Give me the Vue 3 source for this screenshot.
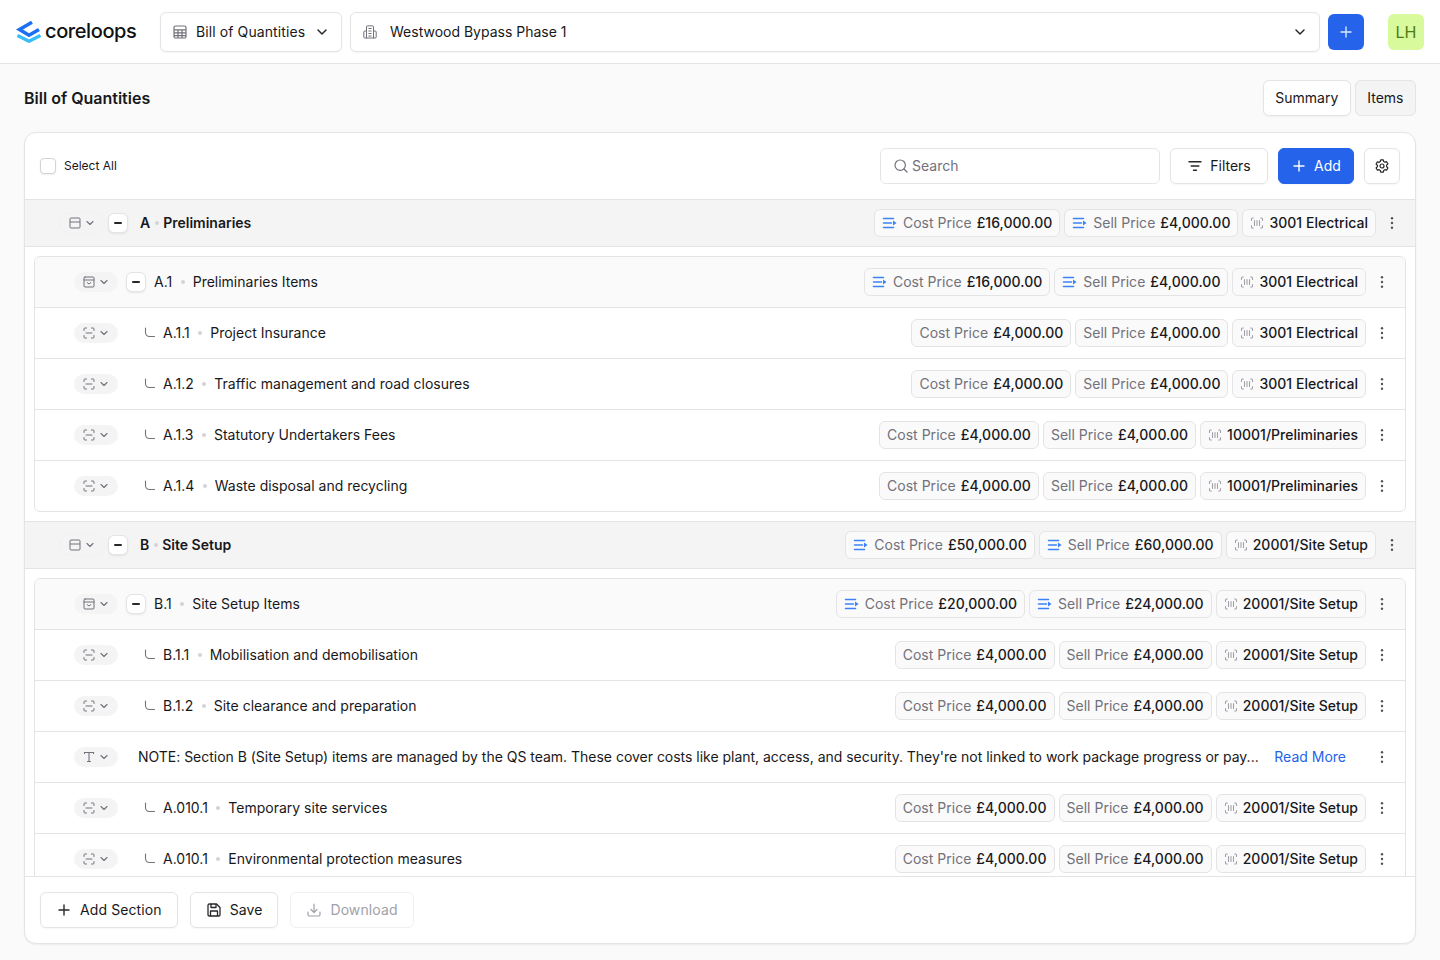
<script setup>
const sections = [
  {
    code: 'A', title: 'Preliminaries', cost: '£16,000.00', sell: '£4,000.00', account: '3001 Electrical',
    group: {
      code: 'A.1', title: 'Preliminaries Items', cost: '£16,000.00', sell: '£4,000.00', account: '3001 Electrical',
      rows: [
        { code: 'A.1.1', title: 'Project Insurance', account: '3001 Electrical' },
        { code: 'A.1.2', title: 'Traffic management and road closures', account: '3001 Electrical' },
        { code: 'A.1.3', title: 'Statutory Undertakers Fees', account: '10001/Preliminaries' },
        { code: 'A.1.4', title: 'Waste disposal and recycling', account: '10001/Preliminaries' },
      ],
    },
  },
  {
    code: 'B', title: 'Site Setup', cost: '£50,000.00', sell: '£60,000.00', account: '20001/Site Setup',
    group: {
      code: 'B.1', title: 'Site Setup Items', cost: '£20,000.00', sell: '£24,000.00', account: '20001/Site Setup',
      rows: [
        { code: 'B.1.1', title: 'Mobilisation and demobilisation', account: '20001/Site Setup' },
        { code: 'B.1.2', title: 'Site clearance and preparation', account: '20001/Site Setup' },
        { note: "NOTE: Section B (Site Setup) items are managed by the QS team. These cover costs like plant, access, and security. They're not linked to work package progress or pay..." },
        { code: 'A.010.1', title: 'Temporary site services', account: '20001/Site Setup' },
        { code: 'A.010.1', title: 'Environmental protection measures', account: '20001/Site Setup' },
      ],
    },
  },
]
</script>

<template>
  <svg class="defs" aria-hidden="true">
    <symbol id="i-chev" viewBox="0 0 16 16"><path d="M4 6l4 4 4-4" fill="none" stroke="currentColor" stroke-width="1.5" stroke-linecap="round" stroke-linejoin="round" /></symbol>
    <symbol id="i-plus" viewBox="0 0 16 16"><path d="M8 3v10M3 8h10" fill="none" stroke="currentColor" stroke-width="1.4" stroke-linecap="round" /></symbol>
    <symbol id="i-table" viewBox="0 0 16 16"><g fill="none" stroke="currentColor" stroke-width="1.2"><rect x="2" y="2" width="12" height="12" rx="1.6" /><path d="M2 5.800h12M2 8.900h12M2 11.600h12M6 5.800V14M10 5.800V14" /></g></symbol>
    <symbol id="i-building" viewBox="0 0 16 16"><g fill="none" stroke="currentColor" stroke-width="1" stroke-linejoin="round" stroke-linecap="round"><path d="M4.500 14V3a1.200 1.200 0 0 1 1.200-1.200h4.600A1.200 1.200 0 0 1 11.500 3v11" /><path d="M4.500 7H2.800A1 1 0 0 0 1.800 8v5A1 1 0 0 0 2.800 14h10.400a1 1 0 0 0 1-1V8a1 1 0 0 0-1-1h-1.700" /><path d="M6.800 4.500h2.400M6.800 7h2.400M6.800 9.500h2.400M6.800 12h2.400" /></g></symbol>
    <symbol id="i-search" viewBox="0 0 16 16"><g fill="none" stroke="currentColor" stroke-width="1.2" stroke-linecap="round"><circle cx="7.200" cy="7.200" r="5.200" /><path d="M11 11l3 3" /></g></symbol>
    <symbol id="i-filter" viewBox="0 0 16 16"><path d="M2 3.800h12M4.200 8h7.600M6.500 12.200h3" fill="none" stroke="currentColor" stroke-width="1.400" stroke-linecap="round" /></symbol>
    <symbol id="i-gear" viewBox="0 0 16 16"><g fill="none" stroke="currentColor" stroke-width="1.200" stroke-linejoin="round"><path d="M6.700 1.800h2.600l.4 1.700 1.200.7 1.700-.5 1.300 2.200-1.300 1.300v1.500l1.300 1.300-1.300 2.200-1.700-.5-1.200.7-.4 1.700H6.700l-.4-1.700-1.200-.7-1.700.5L2.100 10l1.300-1.300V7.300L2.100 6l1.300-2.200 1.700.5 1.200-.7z" /><circle cx="8" cy="8" r="2" /></g></symbol>
    <symbol id="i-dots" viewBox="0 0 16 16"><g fill="currentColor"><circle cx="8" cy="3.200" r="1.200" /><circle cx="8" cy="8" r="1.200" /><circle cx="8" cy="12.800" r="1.200" /></g></symbol>
    <symbol id="i-section" viewBox="0 0 14 14"><g fill="none" stroke="currentColor" stroke-width="1"><rect x="2" y="2" width="10" height="10" rx="1" /><path d="M2 6h10" /></g></symbol>
    <symbol id="i-group" viewBox="0 0 14 14"><g fill="none" stroke="currentColor" stroke-width="1" stroke-linecap="round"><rect x="2" y="2" width="10" height="10" rx="1" /><path d="M2 5h10M5.200 7.600 7 9l1.800-1.400" /></g></symbol>
    <symbol id="i-item" viewBox="0 0 14 14"><path d="M2 4.500V3a1 1 0 0 1 1-1h1.500M9.500 2H11a1 1 0 0 1 1 1v1.500M12 9.500V11a1 1 0 0 1-1 1H9.500M4.500 12H3a1 1 0 0 1-1-1V9.500M4 7h6" fill="none" stroke="currentColor" stroke-width="1" stroke-linecap="round" /></symbol>
    <symbol id="i-text" viewBox="0 0 14 14"><path d="M2.500 3.500V2.500h9v1M7 2.500v9M5.500 11.500h3" fill="none" stroke="currentColor" stroke-width="1.100" stroke-linecap="round" /></symbol>
    <symbol id="i-corner" viewBox="0 0 12 12"><path d="M1.500 1v4.500A4 4 0 0 0 5.500 9.500h5" fill="none" stroke="currentColor" stroke-width="1.100" stroke-linecap="round" /></symbol>
    <symbol id="i-price" viewBox="0 0 16 16"><path d="M1.500 3.500h10M1.500 8h8M1.500 12.500h10" fill="none" stroke="currentColor" stroke-width="1.500" stroke-linecap="round" /><path d="M11 5.500 14.500 8 11 10.500z" fill="currentColor" /></symbol>
    <symbol id="i-code" viewBox="0 0 14 14"><path d="M1.500 4.500V3a1 1 0 0 1 1-1h.8M10.700 2h.8a1 1 0 0 1 1 1v1.500M12.500 9.500V11a1 1 0 0 1-1 1h-.8M3.300 12h-.8a1 1 0 0 1-1-1V9.500M4.500 4.500v5M7 4.500v5M9.500 4.500v5" fill="none" stroke="currentColor" stroke-width="1.100" stroke-linecap="round" /></symbol>
    <symbol id="i-save" viewBox="0 0 16 16"><g fill="none" stroke="currentColor" stroke-width="1.300" stroke-linejoin="round"><path d="M2 3.300A1.300 1.300 0 0 1 3.300 2h7.200L14 5.500v7.200a1.300 1.300 0 0 1-1.300 1.300H3.300A1.300 1.300 0 0 1 2 12.700z" /><path d="M5 2v3.500h5V2M4.500 14V9h7v5" /></g></symbol>
    <symbol id="i-download" viewBox="0 0 16 16"><path d="M8 2v8M5 7.500 8 10.500l3-3M2 10v2.500A1.500 1.500 0 0 0 3.500 14h9a1.500 1.500 0 0 0 1.500-1.500V10" fill="none" stroke="currentColor" stroke-width="1.200" stroke-linecap="round" stroke-linejoin="round" /></symbol>
  </svg>

  <div class="app">
    <header class="topbar">
      <div class="logo">
        <svg class="logo-mark" viewBox="0 0 26 23" aria-hidden="true">
          <path d="M1.500 15.500 13 21.200l11.500-5.700" fill="none" stroke="#38bdf8" stroke-width="3.400" />
          <path d="M16 2.300 3.500 9.500 13 15.200l10-5.700" fill="none" stroke="#1d6ff2" stroke-width="3.600" />
        </svg>
        <span class="logo-text">coreloops</span>
      </div>
      <button class="select module-select">
        <svg class="ic16 muted"><use href="#i-table" /></svg>
        <span>Bill of Quantities</span>
        <svg class="ic16 dark"><use href="#i-chev" /></svg>
      </button>
      <button class="select project-select">
        <svg class="ic16 muted"><use href="#i-building" /></svg>
        <span class="grow">Westwood Bypass Phase 1</span>
        <svg class="ic16 dark"><use href="#i-chev" /></svg>
      </button>
      <button class="new-btn"><svg class="ic16"><use href="#i-plus" /></svg></button>
      <div class="avatar">LH</div>
    </header>

    <main class="page">
      <div class="page-head">
        <h1>Bill of Quantities</h1>
        <div class="tabs">
          <button class="btn tab">Summary</button>
          <button class="btn tab tab-active">Items</button>
        </div>
      </div>

      <section class="card">
        <div class="toolbar">
          <label class="select-all"><span class="check"></span>Select All</label>
          <div class="tools">
            <div class="search">
              <svg class="ic16 muted"><use href="#i-search" /></svg>
              <span>Search</span>
            </div>
            <button class="btn filters"><svg class="ic16 dark"><use href="#i-filter" /></svg>Filters</button>
            <button class="btn primary"><svg class="ic16"><use href="#i-plus" /></svg>Add</button>
            <button class="btn square"><svg class="ic16 dark"><use href="#i-gear" /></svg></button>
          </div>
        </div>

        <div class="scroll">
          <template v-for="s in sections" :key="s.code">
            <div class="section-row">
              <span class="kind kind-section">
                <svg class="ic14"><use href="#i-section" /></svg>
                <svg class="ic12"><use href="#i-chev" /></svg>
              </span>
              <button class="collapse"><span></span></button>
              <span class="sec-code">{{ s.code }}</span>
              <i class="dot tight"></i>
              <span class="sec-title">{{ s.title }}</span>
              <div class="pills">
                <span class="pill"><svg class="ic16 blue"><use href="#i-price" /></svg><em>Cost Price</em><b>{{ s.cost }}</b></span>
                <span class="pill"><svg class="ic16 blue"><use href="#i-price" /></svg><em>Sell Price</em><b>{{ s.sell }}</b></span>
                <span class="pill"><svg class="ic14 faint"><use href="#i-code" /></svg><b>{{ s.account }}</b></span>
              </div>
              <svg class="ic16 kebab"><use href="#i-dots" /></svg>
            </div>

            <div class="group">
              <div class="row group-head">
                <span class="kind">
                  <svg class="ic14"><use href="#i-group" /></svg>
                  <svg class="ic12"><use href="#i-chev" /></svg>
                </span>
                <button class="collapse"><span></span></button>
                <span class="code">{{ s.group.code }}</span>
                <i class="dot"></i>
                <span class="title">{{ s.group.title }}</span>
                <div class="pills">
                  <span class="pill"><svg class="ic16 blue"><use href="#i-price" /></svg><em>Cost Price</em><b>{{ s.group.cost }}</b></span>
                  <span class="pill"><svg class="ic16 blue"><use href="#i-price" /></svg><em>Sell Price</em><b>{{ s.group.sell }}</b></span>
                  <span class="pill"><svg class="ic14 faint"><use href="#i-code" /></svg><b>{{ s.group.account }}</b></span>
                </div>
                <svg class="ic16 kebab"><use href="#i-dots" /></svg>
              </div>

              <div v-for="(r, i) in s.group.rows" :key="i" class="row">
                <template v-if="r.note">
                  <span class="kind">
                    <svg class="ic14"><use href="#i-text" /></svg>
                    <svg class="ic12"><use href="#i-chev" /></svg>
                  </span>
                  <span class="note">{{ r.note }}</span>
                  <a class="read-more">Read More</a>
                  <svg class="ic16 kebab"><use href="#i-dots" /></svg>
                </template>
                <template v-else>
                  <span class="kind">
                    <svg class="ic14"><use href="#i-item" /></svg>
                    <svg class="ic12"><use href="#i-chev" /></svg>
                  </span>
                  <svg class="ic12 corner"><use href="#i-corner" /></svg>
                  <span class="code">{{ r.code }}</span>
                  <i class="dot"></i>
                  <span class="title">{{ r.title }}</span>
                  <div class="pills">
                    <span class="pill"><em>Cost Price</em><b>£4,000.00</b></span>
                    <span class="pill"><em>Sell Price</em><b>£4,000.00</b></span>
                    <span class="pill"><svg class="ic14 faint"><use href="#i-code" /></svg><b>{{ r.account }}</b></span>
                  </div>
                  <svg class="ic16 kebab"><use href="#i-dots" /></svg>
                </template>
              </div>
            </div>
          </template>
        </div>

        <div class="footer">
          <button class="btn foot"><svg class="ic16 dark"><use href="#i-plus" /></svg>Add Section</button>
          <button class="btn foot"><svg class="ic16 dark"><use href="#i-save" /></svg>Save</button>
          <button class="btn foot disabled"><svg class="ic16"><use href="#i-download" /></svg>Download</button>
        </div>
      </section>
    </main>
  </div>
</template>

<style>
html, body { margin: 0; height: 100%; overflow: hidden; }
</style>

<style scoped>
* { box-sizing: border-box; }
.defs { position: absolute; width: 0; height: 0; overflow: hidden; }
.app {
  height: 960px;
  display: flex;
  flex-direction: column;
  background: #fafafa;
  color: #18181b;
  font: 14px/20px Inter, "Liberation Sans", sans-serif;
}
button { font: inherit; color: inherit; cursor: pointer; }
.ic16 { width: 16px; height: 16px; flex: none; }
.ic14 { width: 14px; height: 14px; flex: none; }
.ic12 { width: 12px; height: 12px; flex: none; }
.muted { color: #71717a; }
.dark { color: #27272a; }
.blue { color: #3b82f6; }
.faint { color: #a1a1aa; }

.topbar {
  height: 64px;
  flex: none;
  display: flex;
  align-items: center;
  background: #fff;
  border-bottom: 1px solid #e4e4e7;
  padding: 0 16px;
}
.logo { display: flex; align-items: center; gap: 3px; width: 144px; }
.logo-mark { width: 26px; height: 23px; flex: none; }
.logo-text { font-weight: 500; font-size: 20px; letter-spacing: -0.4px; color: #111; margin-top: -2px; }
.select {
  height: 40px;
  display: flex;
  align-items: center;
  background: #fff;
  border: 1px solid #e4e4e7;
  border-radius: 6px;
  box-shadow: 0 1px 2px rgba(0, 0, 0, .04);
  padding: 0 11px;
  text-align: left;
}
.module-select { width: 182px; gap: 8px; letter-spacing: .1px; }
.module-select span { flex: 1; }
.project-select { flex: 1; margin-left: 8px; gap: 12px; }
.grow { flex: 1; }
.new-btn {
  width: 36px;
  height: 36px;
  margin-left: 8px;
  display: grid;
  place-items: center;
  border: 0;
  border-radius: 6px;
  background: #2563eb;
  color: #dbeafe;
  padding: 0;
}
.avatar {
  width: 36px;
  height: 36px;
  margin-left: 24px;
  border-radius: 6px;
  background: #d9f99d;
  color: #4d7c0f;
  display: grid;
  place-items: center;
  font-size: 16px;
}

.page { flex: 1; min-height: 0; display: flex; flex-direction: column; padding: 16px 24px; }
.page-head { display: flex; align-items: center; justify-content: space-between; height: 36px; margin-bottom: 16px; flex: none; }
h1 { margin: 0; font-size: 16px; font-weight: 600; line-height: 24px; }
.tabs { display: flex; gap: 4px; }
.btn {
  height: 36px;
  display: inline-flex;
  align-items: center;
  justify-content: center;
  padding: 0 11px;
  background: #fff;
  border: 1px solid #e4e4e7;
  border-radius: 6px;
  box-shadow: 0 1px 2px rgba(0, 0, 0, .04);
  white-space: nowrap;
}
.tab { padding: 0 11.5px; }
.tab-active { background: #f4f4f5; box-shadow: none; }

.card {
  flex: 1;
  min-height: 0;
  display: flex;
  flex-direction: column;
  background: #fff;
  border: 1px solid #e4e4e7;
  border-radius: 12px;
  box-shadow: 0 1px 2px rgba(0, 0, 0, .06);
  overflow: hidden;
}
.toolbar { height: 66px; flex: none; display: flex; align-items: center; justify-content: space-between; padding: 0 15px; }
.select-all { display: flex; align-items: center; gap: 8px; font-size: 12px; }
.check { width: 16px; height: 16px; background: #fff; border: 1px solid #d4d4d8; border-radius: 4px; box-shadow: 0 1px 2px rgba(0, 0, 0, .08); }
.tools { display: flex; gap: 10px; }
.search {
  width: 280px;
  height: 36px;
  display: flex;
  align-items: center;
  gap: 3px;
  padding: 0 12px;
  border: 1px solid #e4e4e7;
  border-radius: 6px;
  color: #71717a;
}
.filters { width: 98px; gap: 7px; }
.primary { width: 76px; gap: 7px; background: #2563eb; border-color: #2563eb; color: #fff; }
.square { width: 36px; padding: 0; }

.scroll { flex: 1; min-height: 0; overflow: hidden; border-bottom: 1px solid #e4e4e7; }
.section-row {
  height: 48px;
  display: flex;
  align-items: center;
  padding: 0 15px 0 35px;
  background: #f4f4f5;
  border-top: 1px solid #e4e4e7;
  border-bottom: 1px solid #e4e4e7;
}
.kind {
  width: 44px;
  height: 20px;
  flex: none;
  display: flex;
  align-items: center;
  justify-content: center;
  gap: 2px;
  border-radius: 10px;
  background: #f4f4f5;
  color: #71717a;
}
.kind-section { box-shadow: 0 0 0 1px #f1f1f2; }
.collapse {
  width: 20px;
  height: 20px;
  flex: none;
  margin: 0 8px;
  padding: 0;
  display: grid;
  place-items: center;
  background: #fff;
  border: 1px solid #e4e4e7;
  border-radius: 6px;
  box-shadow: 0 1px 2px rgba(0, 0, 0, .08);
}
.collapse span { width: 8px; height: 2px; border-radius: 1px; background: #27272a; }
.section-row .collapse { margin: 0 12px 0 4px; }
.sec-code, .sec-title { font-weight: 600; }
.dot { width: 4px; height: 4px; flex: none; border-radius: 50%; background: #d4d4d8; margin: 0 8px 0 8.5px; }
.dot.tight { margin: 0 4px 0 5px; }
.pills { margin-left: auto; display: flex; gap: 4px; }
.pill {
  height: 28px;
  display: inline-flex;
  align-items: center;
  padding: 0 7px;
  background: #fafafa;
  border: 1px solid #e4e4e7;
  border-radius: 6px;
  white-space: nowrap;
  letter-spacing: .02px;
}
.pill em { font-style: normal; color: #71717a; margin-right: 5px; }
.pill b { font-weight: 500; }
.pill svg { margin-right: 5px; }
.kebab { color: #52525b; margin-left: 8px; }

.group { margin: 9px; border: 1px solid #e4e4e7; border-radius: 6px; overflow: hidden; background: #fff; }
.row {
  height: 51px;
  display: flex;
  align-items: center;
  padding: 0 15px 0 39px;
  border-bottom: 1px solid #e4e4e7;
}
.row:last-child { border-bottom: 0; height: 50px; }
.group-head { background: #fafafa; }
.corner { color: #71717a; margin: 0 7px 0 26px; }
.note { margin-left: 20px; white-space: nowrap; letter-spacing: -.018px; }
.read-more { margin-left: auto; color: #2563eb; margin-right: 28px; }
.read-more + .kebab { margin-left: 0; }

.footer { height: 66px; flex: none; display: flex; align-items: center; gap: 12px; padding: 0 15px; }
.foot { gap: 8px; padding: 0 15px; letter-spacing: .1px; }
.disabled { color: #a1a1aa; box-shadow: none; border-color: #f0f0f1; }
</style>
